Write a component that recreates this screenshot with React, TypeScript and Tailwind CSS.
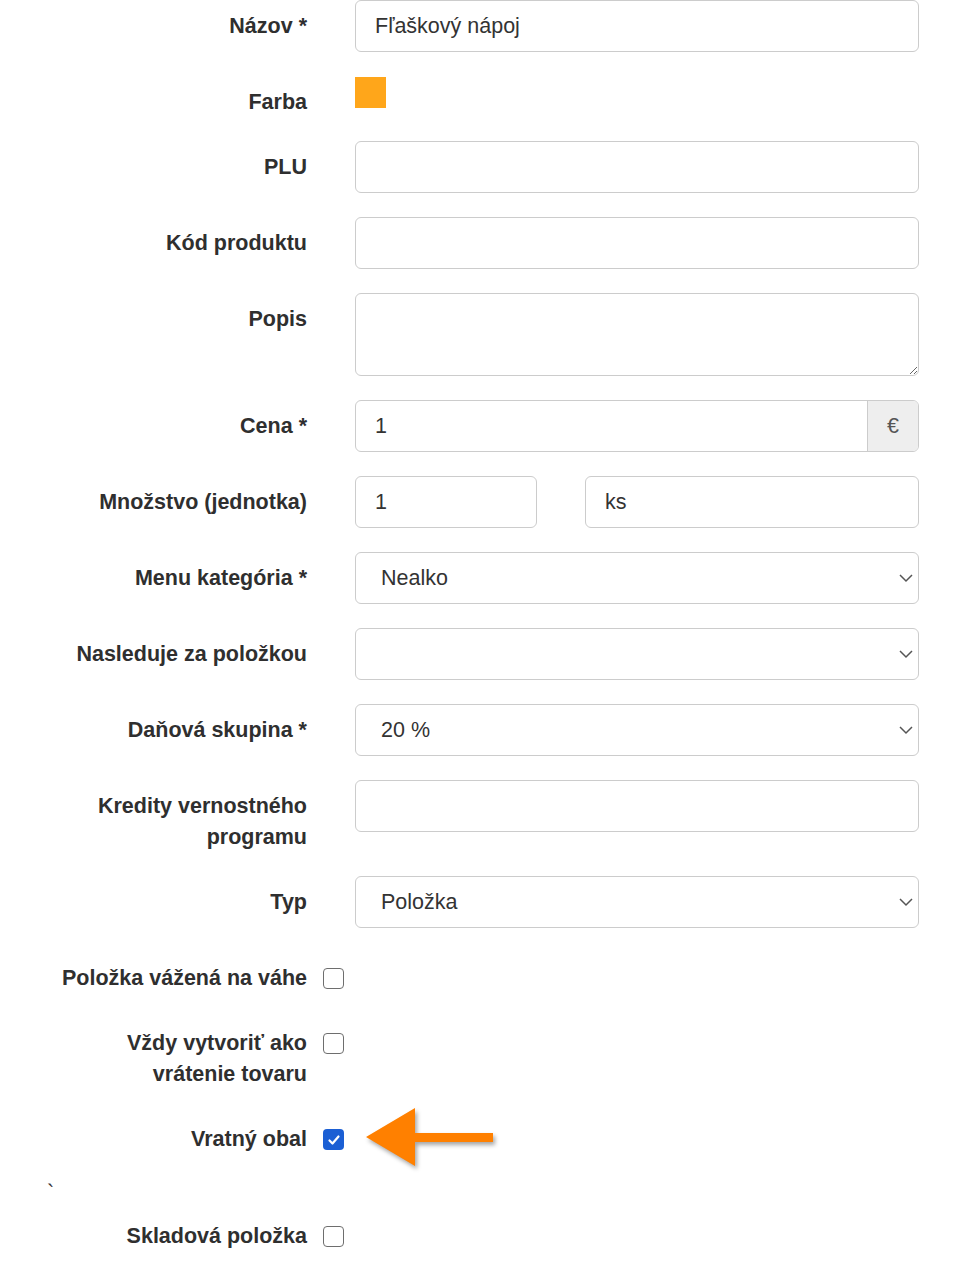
import React from "react";

const font = { fontFamily: '"Liberation Sans", Arial, Helvetica, sans-serif' };

function Label({ children }: { children: React.ReactNode }) {
  return (
    <div className="-mb-[1px] w-[307px] shrink-0 pt-[11px] text-right text-[21.5px] font-bold leading-[31px] text-[#2f2f2f] whitespace-nowrap">
      {children}
    </div>
  );
}

function Row({ label, children }: { label: React.ReactNode; children?: React.ReactNode }) {
  return (
    <div className="flex items-start">
      <Label>{label}</Label>
      <div className="ml-[48px] w-[564px]">{children}</div>
    </div>
  );
}

function TextInput({ value = "", className = "" }: { value?: string; className?: string }) {
  return (
    <div
      className={`flex h-[52px] items-center rounded-[6px] border border-[#cccccc] bg-white pl-[19px] text-[21.5px] text-[#333333] ${className}`}
    >
      {value}
    </div>
  );
}

function Select({ value = "" }: { value?: string }) {
  return (
    <div className="flex h-[52px] items-center justify-between rounded-[6px] border border-[#cccccc] bg-white pl-[25px] pr-[4px] text-[21.5px] text-[#333333]">
      <span>{value}</span>
      <svg width="16" height="10" viewBox="0 0 16 10">
        <path d="M2 2 L8 8 L14 2" fill="none" stroke="#555555" strokeWidth="1.5" />
      </svg>
    </div>
  );
}

function Checkbox({ checked = false }: { checked?: boolean }) {
  if (checked) {
    return (
      <div className="flex h-[21px] w-[21px] items-center justify-center rounded-[4px] bg-[#1b5fd4]">
        <svg width="14" height="14" viewBox="0 0 14 14">
          <path d="M2.5 7.5 L5.5 10.5 L11.5 3.5" fill="none" stroke="white" strokeWidth="2.2" strokeLinecap="round" strokeLinejoin="round" />
        </svg>
      </div>
    );
  }
  return <div className="h-[21px] w-[21px] rounded-[4px] border-[1.5px] border-[#6e6e6e] bg-white" />;
}

function CheckRow({ label, checked, children }: { label: React.ReactNode; checked?: boolean; children?: React.ReactNode }) {
  return (
    <div className="relative flex items-start">
      <Label>{label}</Label>
      <div className="ml-[16px] mt-[16px]">
        <Checkbox checked={checked} />
      </div>
      {children}
    </div>
  );
}

export default function App() {
  return (
    <div className="min-h-[1278px] w-[955px] bg-white" style={font}>
      <div className="flex flex-col gap-[24px]">
        <Row label="Názov *">
          <TextInput value="Fľaškový nápoj" />
        </Row>
        <Row label="Farba">
          <div className="mt-[1px] h-[31px] w-[31px] bg-[#ffa61a]" />
        </Row>
        <Row label="PLU">
          <TextInput />
        </Row>
        <Row label="Kód produktu">
          <TextInput />
        </Row>
        <Row label="Popis">
          <textarea
            readOnly
            className="block h-[83px] w-full rounded-[6px] border border-[#cccccc] bg-white outline-none"
          />
        </Row>
        <Row label="Cena *">
          <div className="flex h-[52px] overflow-hidden rounded-[6px] border border-[#cccccc] bg-white text-[21.5px] text-[#333333]">
            <div className="flex flex-1 items-center pl-[19px]">1</div>
            <div className="flex w-[51px] items-center justify-center border-l border-[#cccccc] bg-[#eeeeee] text-[#555555]">
              €
            </div>
          </div>
        </Row>
        <Row label="Množstvo (jednotka)">
          <div className="flex gap-[48px]">
            <TextInput value="1" className="w-[182px]" />
            <TextInput value="ks" className="flex-1" />
          </div>
        </Row>
        <Row label="Menu kategória *">
          <Select value="Nealko" />
        </Row>
        <Row label="Nasleduje za položkou">
          <Select />
        </Row>
        <Row label="Daňová skupina *">
          <Select value="20 %" />
        </Row>
        <Row
          label={
            <>
              Kredity vernostného
              <br />
              programu
            </>
          }
        >
          <TextInput />
        </Row>
        <Row label="Typ">
          <Select value="Položka" />
        </Row>
        <CheckRow label="Položka vážená na váhe" />
        <CheckRow
          label={
            <>
              Vždy vytvoriť ako
              <br />
              vrátenie tovaru
            </>
          }
        />
        <CheckRow label="Vratný obal" checked>
          <svg
            width="140"
            height="70"
            viewBox="0 0 140 70"
            className="absolute left-[362px] top-[-9px]"
            style={{ filter: "drop-shadow(2px 3px 2px rgba(0,0,0,0.35))" }}
          >
            <path d="M4 33 L53 4 L53 29 L131 29 L131 38 L53 38 L53 62 Z" fill="#ff8000" />
          </svg>
        </CheckRow>
        <div className="h-[8px] pl-[47px] text-[21.5px] leading-[31px] text-[#333333]">`</div>
        <CheckRow label="Skladová položka" />
      </div>
    </div>
  );
}
